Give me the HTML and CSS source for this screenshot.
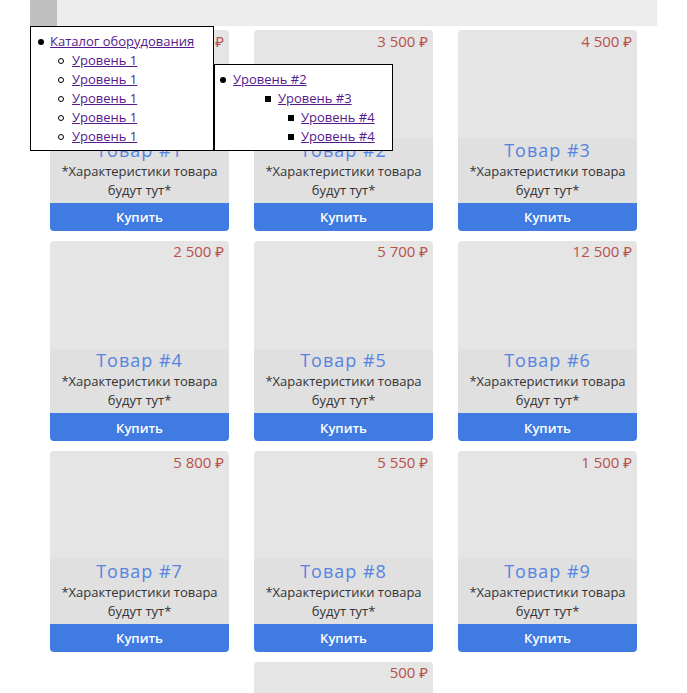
FILE: index.html
```html
<!DOCTYPE html>
<html lang="ru">
<head>
<meta charset="utf-8">
<title>Каталог</title>
<link rel="stylesheet" href="styles.css">
</head>
<body>
<div class="page">
  <header class="topbar"><div class="topbar-btn"></div></header>

  <nav class="menu menu-main">
    <ul class="lvl lvl-1">
      <li><a href="#">Каталог оборудования</a>
        <ul class="lvl lvl-circle">
          <li><a href="#">Уровень 1</a></li>
          <li><a href="#">Уровень 1</a></li>
          <li><a href="#">Уровень 1</a></li>
          <li><a href="#">Уровень 1</a></li>
          <li><a href="#">Уровень 1</a></li>
        </ul>
      </li>
    </ul>
  </nav>

  <nav class="menu menu-sub">
    <ul class="lvl lvl-2">
      <li><a href="#">Уровень #2</a>
        <ul class="lvl lvl-3">
          <li><a href="#">Уровень #3</a>
            <ul class="lvl lvl-4">
              <li><a href="#">Уровень #4</a></li>
              <li><a href="#">Уровень #4</a></li>
            </ul>
          </li>
        </ul>
      </li>
    </ul>
  </nav>

  <main class="grid">
    <div class="card"><div class="card-img"><span class="price">1 000 ₽</span></div><div class="card-info"><div class="card-title">Товар #1</div><div class="card-desc">*Характеристики товара будут тут*</div></div><button class="buy">Купить</button></div>
    <div class="card"><div class="card-img"><span class="price">3 500 ₽</span></div><div class="card-info"><div class="card-title">Товар #2</div><div class="card-desc">*Характеристики товара будут тут*</div></div><button class="buy">Купить</button></div>
    <div class="card"><div class="card-img"><span class="price">4 500 ₽</span></div><div class="card-info"><div class="card-title">Товар #3</div><div class="card-desc">*Характеристики товара будут тут*</div></div><button class="buy">Купить</button></div>
    <div class="card"><div class="card-img"><span class="price">2 500 ₽</span></div><div class="card-info"><div class="card-title">Товар #4</div><div class="card-desc">*Характеристики товара будут тут*</div></div><button class="buy">Купить</button></div>
    <div class="card"><div class="card-img"><span class="price">5 700 ₽</span></div><div class="card-info"><div class="card-title">Товар #5</div><div class="card-desc">*Характеристики товара будут тут*</div></div><button class="buy">Купить</button></div>
    <div class="card"><div class="card-img"><span class="price">12 500 ₽</span></div><div class="card-info"><div class="card-title">Товар #6</div><div class="card-desc">*Характеристики товара будут тут*</div></div><button class="buy">Купить</button></div>
    <div class="card"><div class="card-img"><span class="price">5 800 ₽</span></div><div class="card-info"><div class="card-title">Товар #7</div><div class="card-desc">*Характеристики товара будут тут*</div></div><button class="buy">Купить</button></div>
    <div class="card"><div class="card-img"><span class="price">5 550 ₽</span></div><div class="card-info"><div class="card-title">Товар #8</div><div class="card-desc">*Характеристики товара будут тут*</div></div><button class="buy">Купить</button></div>
    <div class="card"><div class="card-img"><span class="price">1 500 ₽</span></div><div class="card-info"><div class="card-title">Товар #9</div><div class="card-desc">*Характеристики товара будут тут*</div></div><button class="buy">Купить</button></div>
    <div class="card"><div class="card-img"><span class="price">500 ₽</span></div><div class="card-info"><div class="card-title">Товар #10</div><div class="card-desc">*Характеристики товара будут тут*</div></div><button class="buy">Купить</button></div>
  </main>
</div>
</body>
</html>
```

FILE: styles.css
```css
html, body {
  margin: 0;
  padding: 0;
  background: #fff;
}

body {
  font-family: "Open Sans", "Noto Sans", sans-serif;
  font-size: 14px;
  color: #333;
}

.page {
  position: relative;
  width: 627px;
  margin: 0 30px;
}

.topbar {
  height: 26px;
  background: #ececec;
  display: flex;
}

.topbar-btn {
  width: 27px;
  background: #bfbfbf;
}

/* dropdown menus */
.menu {
  position: absolute;
  z-index: 5;
  background: #fff;
  border: 1px solid #000;
  box-sizing: border-box;
  padding: 5px 0 4px;
  font-size: 13px;
  line-height: 19px;
}

.menu-main {
  left: 0;
  top: 26px;
  width: 184px;
  height: 125px;
}

.menu-sub {
  left: 184px;
  top: 64px;
  width: 179px;
  height: 87px;
}

.menu a {
  color: #551a8b;
  text-decoration: underline;
}

.lvl {
  margin: 0;
  padding: 0;
  list-style: none;
}

.lvl > li::before {
  content: "";
  display: inline-block;
  box-sizing: border-box;
  width: 6px;
  height: 6px;
  margin-left: -13px;
  margin-right: 7px;
  vertical-align: 1px;
  background: #000;
}

.lvl-1 { padding-left: 19px; }
.lvl-1 > li::before { border-radius: 50%; width: 6px; margin-left: -12px; margin-right: 6px; }

.lvl-circle { padding-left: 22px; }
.lvl-circle > li::before {
  border-radius: 50%;
  background: transparent;
  border: 1px solid #000;
  width: 6px;
  margin-left: -14px;
  margin-right: 8px;
}

.lvl-2 { padding-left: 18px; }
.lvl-2 > li::before { border-radius: 50%; margin-left: -13px; margin-right: 7px; }

.lvl-3 { padding-left: 45px; }
.lvl-4 { padding-left: 23px; }

/* product grid */
.grid {
  display: flex;
  flex-wrap: wrap;
  justify-content: center;
  gap: 10px 25px;
  padding: 4px 20px 20px;
}

.card {
  width: 179px;
  border-radius: 4px;
  overflow: hidden;
  display: flex;
  flex-direction: column;
  text-align: center;
}

.card-img {
  height: 108px;
  background: #e5e5e5;
  text-align: right;
  padding: 0.5px 5px 0 0;
  box-sizing: border-box;
}

.price {
  color: #b9504c;
  font-size: 15px;
  line-height: 21px;
}

.card-info {
  background: #e0e0e0;
  height: 64.5px;
  padding-top: 0.5px;
  box-sizing: border-box;
}

.card-title {
  color: #5583e0;
  font-size: 18px;
  line-height: 23px;
  letter-spacing: 1px;
}

.card-desc {
  font-size: 13px;
  line-height: 19px;
  color: #333;
  padding: 0 6px;
}

.buy {
  height: 28px;
  border: 0;
  margin: 0;
  padding: 1px 0 0;
  background: #3f7be0;
  color: #fff;
  font-family: inherit;
  font-size: 13px;
  font-weight: 600;
  cursor: pointer;
}
```
